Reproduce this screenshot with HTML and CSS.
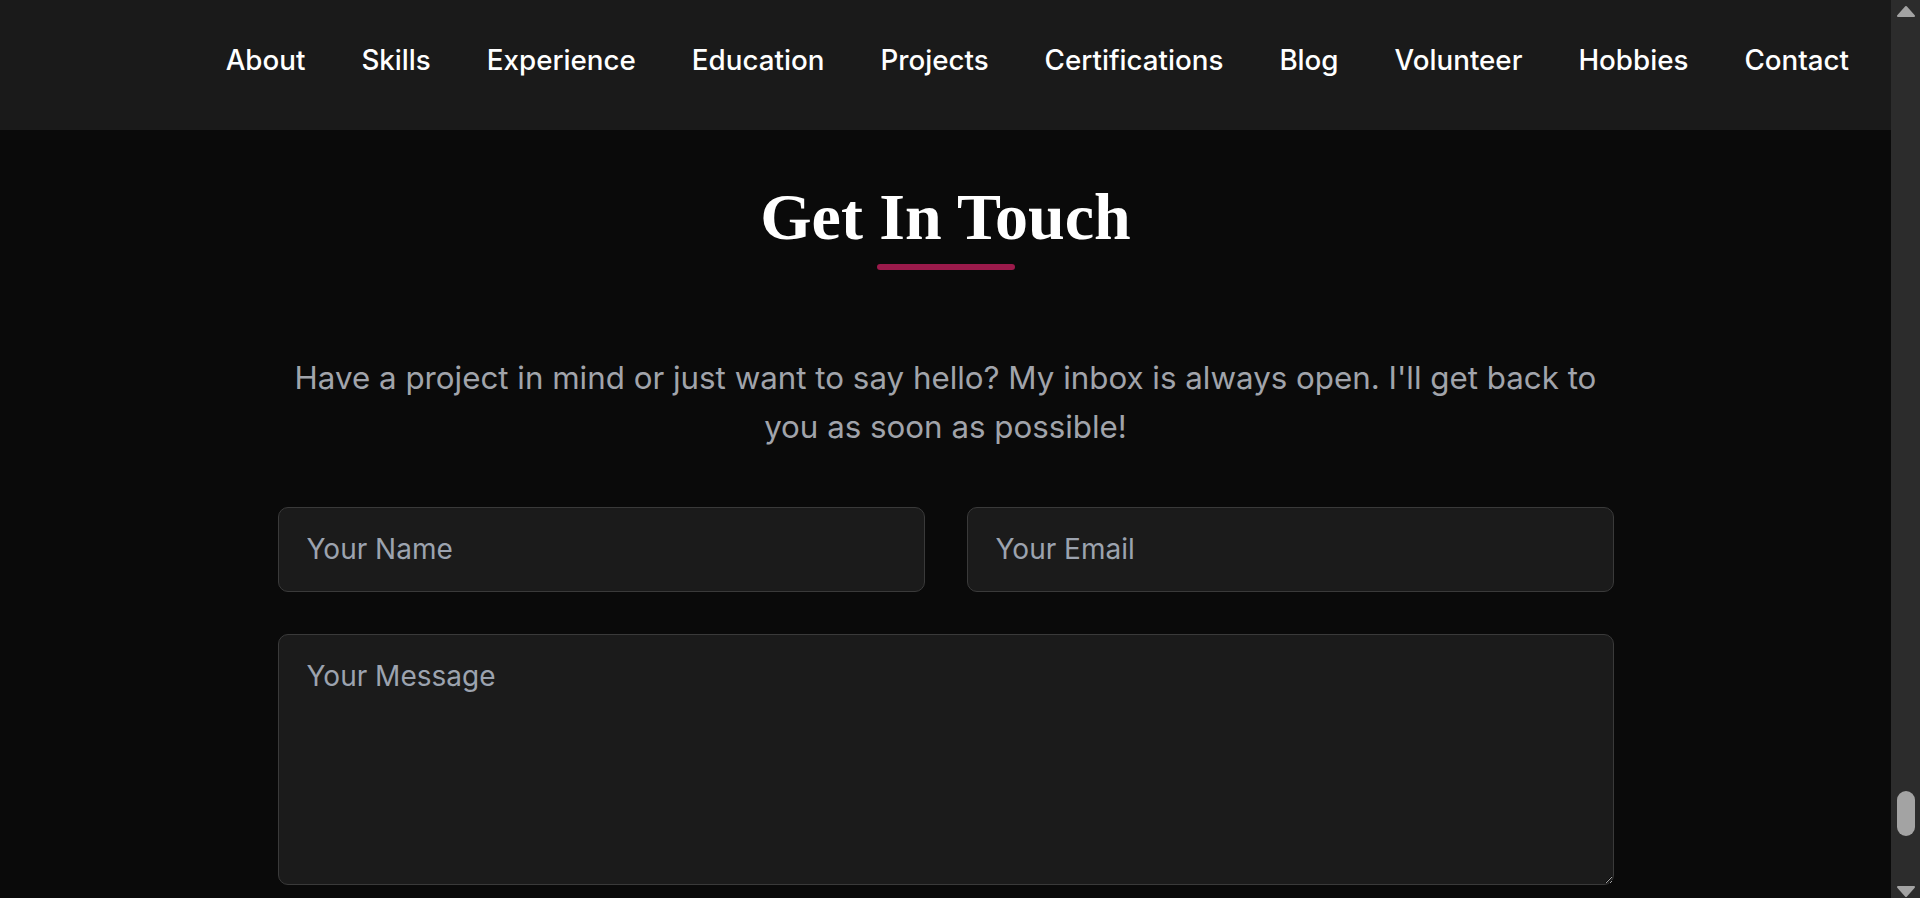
FILE: index.html
```html
<!DOCTYPE html>
<html lang="en">
<head>
<meta charset="utf-8">
<title>Get In Touch</title>
<link rel="stylesheet" href="styles.css">
</head>
<body>
<div class="page">
  <header class="site-header">
    <nav class="main-nav">
      <a href="#about">About</a>
      <a href="#skills">Skills</a>
      <a href="#experience">Experience</a>
      <a href="#education">Education</a>
      <a href="#projects">Projects</a>
      <a href="#certifications">Certifications</a>
      <a href="#blog">Blog</a>
      <a href="#volunteer">Volunteer</a>
      <a href="#hobbies">Hobbies</a>
      <a href="#contact">Contact</a>
    </nav>
  </header>
  <main>
    <section class="contact" id="contact">
      <div class="contact-inner">
        <h2 class="section-title">Get In Touch</h2>
        <span class="title-bar"></span>
        <p class="contact-intro">Have a project in mind or just want to say hello? My inbox is always open. I'll get back to you as soon as possible!</p>
        <form class="contact-form">
          <div class="form-row">
            <input type="text" class="field" placeholder="Your Name">
            <input type="email" class="field" placeholder="Your Email">
          </div>
          <textarea class="field field-message" placeholder="Your Message"></textarea>
        </form>
      </div>
    </section>
  </main>
</div>
<aside class="scroll-rail" aria-hidden="true">
  <svg class="rail-arrow" width="29" height="22" viewBox="0 0 29 22"><polygon points="7,16 15,7 23,16" fill="#a3a3a3" stroke="#a3a3a3" stroke-width="2" stroke-linejoin="round"/></svg>
  <div class="rail-track"><span class="rail-thumb"></span></div>
  <svg class="rail-arrow" width="29" height="22" viewBox="0 0 29 22"><polygon points="7,11 23,11 15,20" fill="#a3a3a3" stroke="#a3a3a3" stroke-width="2" stroke-linejoin="round"/></svg>
</aside>
</body>
</html>
```

FILE: styles.css
```css
html {
  background: #0a0a0a;
}

body {
  margin: 0;
  display: flex;
  align-items: flex-start;
  background: #0a0a0a;
  color: #ffffff;
  font-family: Inter, "Noto Sans", sans-serif;
}

.page {
  flex: 1;
  min-width: 0;
}

.site-header {
  height: 130px;
  box-sizing: border-box;
  padding: 0 42px 10px 0;
  background: #1a1a1a;
  display: flex;
  justify-content: flex-end;
  align-items: center;
}

.main-nav {
  display: flex;
  gap: 56px;
}

.main-nav a {
  color: #ffffff;
  text-decoration: none;
  font-size: 27.75px;
  font-weight: 500;
}

.contact {
  padding: 48px 0 84px;
}

.contact-inner {
  max-width: 1336px;
  margin: 0 auto;
  text-align: center;
}

.section-title {
  margin: 0;
  font-family: "Liberation Serif", serif;
  font-weight: 700;
  font-size: 66px;
  line-height: 78px;
  color: #ffffff;
}

.title-bar {
  display: block;
  width: 138px;
  height: 6px;
  margin: 8px auto 0;
  border-radius: 3px;
  background: #9b1a4b;
}

.contact-intro {
  margin: 84px 0 54px;
  font-size: 31.3px;
  line-height: 49.3px;
  color: #a1a4ab;
}

.contact-form {
  display: flex;
  flex-direction: column;
  gap: 42px;
  text-align: left;
}

.form-row {
  display: grid;
  grid-template-columns: 1fr 1fr;
  gap: 42px;
}

.field {
  box-sizing: border-box;
  width: 100%;
  height: 85px;
  margin: 0;
  padding: 0 28px;
  background: #1b1b1b;
  border: 1px solid #3a3a3a;
  border-radius: 10px;
  color: #ffffff;
  font-family: Inter, "Noto Sans", sans-serif;
  font-size: 28px;
  outline: none;
}

.field::placeholder {
  color: #9ca3af;
  opacity: 1;
}

.field-message {
  display: block;
  height: 251px;
  padding: 24px 28px;
  line-height: 34px;
}

.scroll-rail {
  flex: 0 0 29px;
  height: 100vh;
  display: flex;
  flex-direction: column;
  background: #2c2c2c;
}

.rail-arrow {
  display: block;
  flex: 0 0 22px;
}

.rail-track {
  flex: 1;
  padding: 769px 5px 0 6px;
}

.rail-thumb {
  display: block;
  height: 45px;
  border-radius: 9px;
  background: #a3a3a3;
}
```
